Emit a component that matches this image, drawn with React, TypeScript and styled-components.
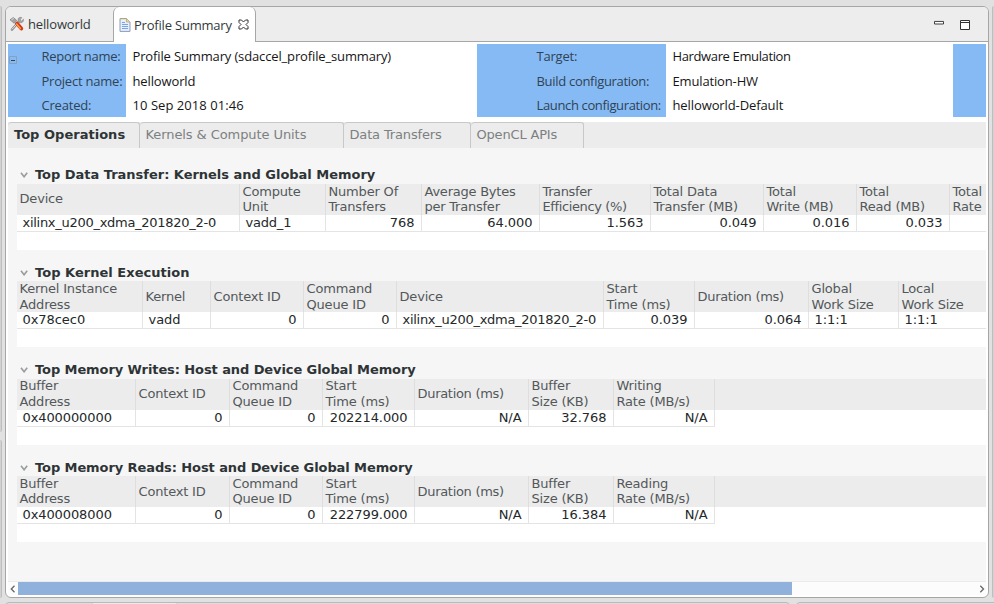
import React from 'react';
import styled, { createGlobalStyle } from 'styled-components';

const GlobalStyle = createGlobalStyle`
  * { box-sizing: border-box; }
  html, body, #root { height: 100%; margin: 0; }
  body { overflow: hidden; background: #e1e1e1; }
`;

const UI_FONT = `"Open Sans", "Noto Sans", sans-serif`;
const TABLE_FONT = `"DejaVu Sans", sans-serif`;

const Text = styled.span<{ $track?: number }>`
  letter-spacing: ${(p) => p.$track ?? 0}px;
`;

const Workbench = styled.div`
  display: grid;
  width: 994px;
  height: 604px;
  grid-template-columns: 2px 984px 2px;
  grid-template-rows: 592px 3px;
  column-gap: 3px;
  row-gap: 4px;
  padding-top: 6px;
  overflow: hidden;
`;

const LeftNeighbours = styled.div`
  display: grid;
  grid-template-rows: 426px 1fr;
  row-gap: 8px;
`;

const NeighbourEdge = styled.div<{ $side: 'left' | 'right' }>`
  background: #d2d2d2;
  border-${(p) => (p.$side === 'left' ? 'right' : 'left')}: 1px solid #bebebe;
  border-radius: ${(p) => (p.$side === 'left' ? '0 3px 3px 0' : '3px 0 0 3px')};
`;

const Editor = styled.main`
  display: grid;
  grid-template-rows: 36px 77px 28px 433px 14px;
  background: #fff;
  border: 1px solid #a6a6a6;
  border-radius: 6px;
  overflow: hidden;
`;

const TabStrip = styled.header`
  display: flex;
  height: 35px;
  background: #ededed;
  border-bottom: 1px solid #a6a6a6;
  font: 13px/20px ${UI_FONT};
  color: #33393b;
`;

const InactiveTab = styled.div`
  display: flex;
  align-items: center;
  gap: 3px;
  width: 107px;
  padding: 0 0 0 3px;
`;

const ActiveTab = styled.div`
  display: flex;
  align-items: center;
  width: 143px;
  height: 35px;
  padding: 0 0 0 5px;
  gap: 3px;
  background: #fff;
  border: 1px solid #a6a6a6;
  border-width: 0 1px;
  border-radius: 6px 6px 0 0;
`;

const CloseIcon = styled.svg`
  margin-left: 3px;
`;

const WindowButtons = styled.div`
  display: flex;
  align-items: flex-start;
  gap: 16px;
  margin-left: auto;
  padding: 13px 18px 0 0;
`;

const ReportHeader = styled.section`
  display: grid;
  grid-template-columns: 118px 351px 189px 287px 33px;
  height: 73px;
  margin: 1px 0 0 2px;
  font: 13px/20px ${UI_FONT};
`;

const HeaderLabels = styled.div<{ $indent?: number }>`
  display: grid;
  grid-template-rows: 24px 25px 24px;
  align-items: center;
  padding-left: ${(p) => p.$indent ?? 0}px;
  background: #86baf5;
  color: #2f4354;
  white-space: nowrap;
`;

const HeaderValues = styled(HeaderLabels)`
  background: #fff;
  color: #161616;
`;

const FirstLabels = styled.div`
  display: grid;
  grid-template-columns: 9px 1fr;
  column-gap: 24px;
  background: #86baf5;
`;

const Collapse = styled.svg`
  margin: 12px 0 0 1px;
`;

const SectionTabs = styled.nav`
  display: flex;
  height: 26px;
  margin: 2px 2px 0 2px;
  background: #ececec;
  font: 13px/24px ${TABLE_FONT};
`;

const SectionTab = styled.div<{ $width: number; $active?: boolean }>`
  width: ${(p) => p.$width}px;
  padding-left: ${(p) => (p.$active ? 6 : 5.5)}px;
  border-top: 1px solid #c8c8c8;
  border-right: 1px solid #c8c8c8;
  border-radius: 4px 3px 0 0;
  background: #ececec;
  font-weight: ${(p) => (p.$active ? 'bold' : 'normal')};
  color: ${(p) => (p.$active ? '#2e3436' : '#7c8081')};
  white-space: nowrap;
`;

const Content = styled.div`
  display: flex;
  flex-direction: column;
  margin: 0 2px;
  padding: 19.4px 0 0 9px;
  background: #f6f6f6;
  overflow: hidden;
`;

const Section = styled.section`
  flex: none;
  height: 97.4px;
`;

const SectionTitle = styled.h2`
  display: flex;
  align-items: flex-start;
  gap: 7px;
  height: 16.4px;
  margin: 0;
  padding: 0 0 0 3px;
  font: bold 13px/15px ${TABLE_FONT};
  color: #2e3436;
  white-space: nowrap;
`;

const Disclosure = styled.svg`
  margin-top: 5px;
`;

const TableBox = styled.div`
  height: 66px;
  background: #fff;
  overflow: hidden;
  font: 13px/15.6px ${TABLE_FONT};
`;

const HeadRow = styled.div`
  display: flex;
  height: 31px;
  background: #ececec;
  color: #53585a;
`;

const HeadCell = styled.div<{ $width: number }>`
  display: flex;
  flex-direction: column;
  justify-content: center;
  flex: none;
  width: ${(p) => p.$width}px;
  padding-left: 2.5px;
  border-right: 1px solid #dedede;
  white-space: nowrap;
`;

const BodyRow = styled.div`
  display: flex;
  height: 17px;
  color: #242829;
`;

const BodyCell = styled.div<{ $width: number; $right?: boolean }>`
  flex: none;
  width: ${(p) => p.$width}px;
  padding: 0 ${(p) => (p.$right ? 6.5 : 0)}px 0 5.5px;
  border-right: 1px solid #e4e4e4;
  border-bottom: 1px solid #e4e4e4;
  text-align: ${(p) => (p.$right ? 'right' : 'left')};
  line-height: 15px;
  white-space: nowrap;
`;

const ScrollBar = styled.div`
  display: grid;
  grid-template-columns: 10px 774px 1fr 10px;
  align-items: center;
  height: 14px;
  margin: 0 2px;
  background: #fcfcfc;
  border-top: 1px solid #ebebeb;
`;

const Thumb = styled.div`
  height: 13px;
  background: #8fb1dc;
`;

const ScrollArrow = styled.svg<{ $end?: boolean }>`
  grid-column: ${(p) => (p.$end ? 4 : 1)};
  margin-left: ${(p) => (p.$end ? 3 : 2)}px;
`;

const BelowPanels = styled.div`
  display: flex;
  grid-column: 2 / 4;
  gap: 6px;
`;

const BelowPanel = styled.div<{ $width: number }>`
  display: flex;
  flex: none;
  width: ${(p) => p.$width}px;
  height: 8px;
  border: 1px solid #b9b9b9;
  border-radius: 5px;
  background: #dedede;
`;

const BelowTab = styled.div`
  width: 89px;
  margin-left: 84px;
  border: 1px solid #c2c2c2;
  border-width: 0 1px;
  border-radius: 4px 4px 0 0;
  background: #ececec;
`;

function ToolsIcon() {
  return (
    <svg width="16" height="16" viewBox="0 0 16 16">
      <path d="M3 13.500 10.500 5" stroke="#8b8b8b" strokeWidth="2.600" strokeLinecap="round" />
      <path d="M3.100 13.200 10.400 5.100" stroke="#dedede" strokeWidth="1" strokeLinecap="round" />
      <path d="M9.200 2.600c1-1.400 2.600-1.500 3.600-1l-1.700 2.200 1.400 1.200 2-1.800c.3 1.500-.4 3-2 3.500-2 .5-4-1.600-3.300-4.100Z" fill="#aaa" stroke="#777" strokeWidth=".5" />
      <path d="M1 3.800 4.300 1.500 7.800 4.500 5.200 7.300Z" fill="#a5a5a5" stroke="#6b6b6b" strokeWidth=".6" />
      <path d="M2.500 3.800 4.600 2.400" stroke="#e5e5e5" strokeWidth="1" />
      <path d="M8 7.600 12.300 12.500" stroke="#cf3a1c" strokeWidth="3.800" strokeLinecap="round" />
      <path d="M7.600 8 11.400 12.500" stroke="#fba13a" strokeWidth="1.500" strokeLinecap="round" />
    </svg>
  );
}

function ReportIcon() {
  return (
    <svg width="12" height="14" viewBox="0 0 12 14">
      <path d="M1 .6H7.500L11 4V13.400H1Z" fill="#e6efff" stroke="#8d9bb8" />
      <path d="M1 .6H7.500" stroke="#c0a45d" />
      <path d="M7.500.8V4H11" fill="#f3d998" stroke="#b7a376" strokeWidth=".8" />
      <path d="M3 4.500H6M3 6.500H9M3 8.500H9M3 10.500H9" stroke="#7ea4dc" />
    </svg>
  );
}

function Chevron() {
  return (
    <Disclosure width="8" height="6" viewBox="0 0 8 6">
      <path d="M1 .8 4.100 4.800 7.200.8" fill="none" stroke="#9a9d9d" strokeWidth="1.600" />
    </Disclosure>
  );
}

type Column = {
  head: string[];
  width: number;
  value?: string;
  right?: boolean;
  headTrack?: number;
  track?: number;
};

type Report = { title: string; titleTrack: number; columns: Column[] };

const memoryColumns = (address: string, start: string, size: string, rate: string): Column[] => [
  { head: ['Buffer', 'Address'], width: 119, value: address, track: -0.1 },
  { head: ['Context ID'], width: 94, value: '0', right: true },
  { head: ['Command', 'Queue ID'], width: 93, value: '0', right: true },
  { head: ['Start', 'Time (ms)'], width: 92, value: start, right: true, track: -0.08 },
  { head: ['Duration (ms)'], width: 114, value: 'N/A', right: true, headTrack: -0.3 },
  { head: ['Buffer', 'Size (KB)'], width: 85, value: size, right: true },
  { head: [rate, 'Rate (MB/s)'], width: 101, value: 'N/A', right: true },
];

const reports: Report[] = [
  {
    title: 'Top Data Transfer: Kernels and Global Memory',
    titleTrack: -0.02,
    columns: [
      { head: ['Device'], width: 223, value: 'xilinx_u200_xdma_201820_2-0', track: -0.28 },
      { head: ['Compute', 'Unit'], width: 86, value: 'vadd_1', track: -0.2 },
      { head: ['Number Of', 'Transfers'], width: 96, value: '768', right: true },
      { head: ['Average Bytes', 'per Transfer'], width: 118, value: '64.000', right: true, headTrack: -0.23 },
      { head: ['Transfer', 'Efficiency (%)'], width: 111, value: '1.563', right: true, headTrack: -0.38 },
      { head: ['Total Data', 'Transfer (MB)'], width: 113, value: '0.049', right: true },
      { head: ['Total', 'Write (MB)'], width: 93, value: '0.016', right: true },
      { head: ['Total', 'Read (MB)'], width: 93, value: '0.033', right: true },
      { head: ['Total', 'Rate'], width: 60, value: '' },
    ],
  },
  {
    title: 'Top Kernel Execution',
    titleTrack: 0.03,
    columns: [
      { head: ['Kernel Instance', 'Address'], width: 126, value: '0x78cec0' },
      { head: ['Kernel'], width: 68, value: 'vadd' },
      { head: ['Context ID'], width: 93, value: '0', right: true },
      { head: ['Command', 'Queue ID'], width: 93, value: '0', right: true },
      { head: ['Device'], width: 207, value: 'xilinx_u200_xdma_201820_2-0', track: -0.28 },
      { head: ['Start', 'Time (ms)'], width: 91, value: '0.039', right: true },
      { head: ['Duration (ms)'], width: 114, value: '0.064', right: true, headTrack: -0.3 },
      { head: ['Global', 'Work Size'], width: 90, value: '1:1:1' },
      { head: ['Local', 'Work Size'], width: 110, value: '1:1:1' },
    ],
  },
  {
    title: 'Top Memory Writes: Host and Device Global Memory',
    titleTrack: -0.09,
    columns: memoryColumns('0x400000000', '202214.000', '32.768', 'Writing'),
  },
  {
    title: 'Top Memory Reads: Host and Device Global Memory',
    titleTrack: -0.09,
    columns: memoryColumns('0x400008000', '222799.000', '16.384', 'Reading'),
  },
];

function ReportSection({ title, titleTrack, columns }: Report) {
  return (
    <Section>
      <SectionTitle>
        <Chevron />
        <Text $track={titleTrack}>{title}</Text>
      </SectionTitle>
      <TableBox>
        <HeadRow>
          {columns.map((c, i) => (
            <HeadCell key={i} $width={c.width}>
              {c.head.map((line) => (
                <Text key={line} $track={c.headTrack ?? -0.18}>{line}</Text>
              ))}
            </HeadCell>
          ))}
        </HeadRow>
        <BodyRow>
          {columns.map((c, i) => (
            <BodyCell key={i} $width={c.width} $right={c.right}>
              <Text $track={c.track ?? -0.06}>{c.value}</Text>
            </BodyCell>
          ))}
        </BodyRow>
      </TableBox>
    </Section>
  );
}

export default function App() {
  return (
    <>
      <GlobalStyle />
      <Workbench>
        <LeftNeighbours>
          <NeighbourEdge $side="left" />
          <NeighbourEdge $side="left" />
        </LeftNeighbours>
        <Editor>
          <TabStrip>
            <InactiveTab>
              <ToolsIcon />
              <Text $track={-0.15}>helloworld</Text>
            </InactiveTab>
            <ActiveTab>
              <ReportIcon />
              <Text $track={-0.2}>Profile Summary</Text>
              <CloseIcon width="11" height="11" viewBox="0 0 11 11">
                <path d="M1 1H3.500L5.500 3 7.500 1H10V3.500L8 5.500 10 7.500V10H7.500L5.500 8 3.500 10H1V7.500L3 5.500 1 3.500Z" fill="#fff" stroke="#333" />
              </CloseIcon>
            </ActiveTab>
            <WindowButtons>
              <svg width="10" height="5" viewBox="0 0 10 5">
                <path d="M.5.500H9.500V3.500H.5Z" transform="translate(0 1) scale(1 .86)" fill="#fff" stroke="#333" />
              </svg>
              <svg width="10" height="10" viewBox="0 0 10 10">
                <path d="M.5.500H9.500V9.500H.5ZM.5 2.500H9.500" fill="#fff" stroke="#333" />
              </svg>
            </WindowButtons>
          </TabStrip>
          <ReportHeader>
            <FirstLabels>
              <Collapse width="8" height="8" viewBox="0 0 8 8">
                <path d="M.5.500H7.500V7.500H.5Z" fill="none" stroke="#8aa0b8" />
                <path d="M2 4.500H6" stroke="#2d4358" />
              </Collapse>
              <HeaderLabels $indent={0.5}>
                <Text $track={-0.3}>Report name:</Text>
                <Text $track={-0.22}>Project name:</Text>
                <Text $track={-0.2}>Created:</Text>
              </HeaderLabels>
            </FirstLabels>
            <HeaderValues $indent={6.5}>
              <Text $track={-0.14}>Profile Summary (sdaccel_profile_summary)</Text>
              <Text $track={-0.13}>helloworld</Text>
              <Text $track={0.05}>10 Sep 2018 01:46</Text>
            </HeaderValues>
            <HeaderLabels $indent={59.5}>
              <Text $track={-0.2}>Target:</Text>
              <Text $track={-0.3}>Build configuration:</Text>
              <Text $track={-0.36}>Launch configuration:</Text>
            </HeaderLabels>
            <HeaderValues $indent={6.5}>
              <Text $track={-0.37}>Hardware Emulation</Text>
              <Text $track={-0.15}>Emulation-HW</Text>
              <Text $track={-0.1}>helloworld-Default</Text>
            </HeaderValues>
            <HeaderLabels />
          </ReportHeader>
          <SectionTabs>
            <SectionTab $width={132} $active><Text $track={0.02}>Top Operations</Text></SectionTab>
            <SectionTab $width={204}><Text $track={-0.08}>Kernels &amp; Compute Units</Text></SectionTab>
            <SectionTab $width={127}><Text $track={-0.15}>Data Transfers</Text></SectionTab>
            <SectionTab $width={113}><Text $track={-0.18}>OpenCL APIs</Text></SectionTab>
          </SectionTabs>
          <Content>
            {reports.map((r) => (
              <ReportSection key={r.title} {...r} />
            ))}
          </Content>
          <ScrollBar>
            <ScrollArrow width="6" height="8" viewBox="0 0 6 8">
              <path d="M4.500.8 1.300 4 4.500 7.200" fill="none" stroke="#666" strokeWidth="1.300" />
            </ScrollArrow>
            <Thumb />
            <ScrollArrow $end width="6" height="8" viewBox="0 0 6 8">
              <path d="M1.300.8 4.500 4 1.300 7.200" fill="none" stroke="#666" strokeWidth="1.300" />
            </ScrollArrow>
          </ScrollBar>
        </Editor>
        <NeighbourEdge $side="right" />
        <span />
        <BelowPanels>
          <BelowPanel $width={785}><BelowTab /></BelowPanel>
          <BelowPanel $width={210} />
        </BelowPanels>
      </Workbench>
    </>
  );
}
